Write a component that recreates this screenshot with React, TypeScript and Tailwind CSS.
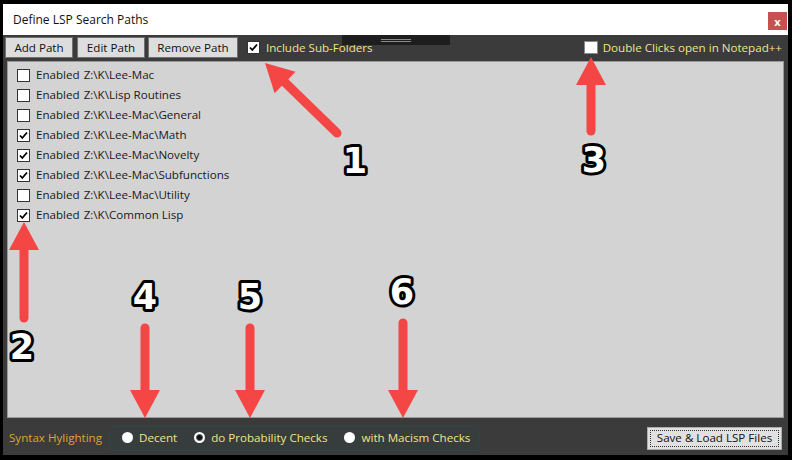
import { useState } from 'react'

const paths = [
  { path: 'Z:\\K\\Lee-Mac', on: false },
  { path: 'Z:\\K\\Lisp Routines', on: false },
  { path: 'Z:\\K\\Lee-Mac\\General', on: false },
  { path: 'Z:\\K\\Lee-Mac\\Math', on: true },
  { path: 'Z:\\K\\Lee-Mac\\Novelty', on: true },
  { path: 'Z:\\K\\Lee-Mac\\Subfunctions', on: true },
  { path: 'Z:\\K\\Lee-Mac\\Utility', on: false },
  { path: 'Z:\\K\\Common Lisp', on: true },
]

function Check({ checked }: { checked: boolean }) {
  return (
    <span className="w-[13px] h-[13px] bg-white border border-[#333333] flex items-center justify-center shrink-0">
      {checked && (
        <svg width="11" height="11" viewBox="0 0 11 11">
          <path d="M2 5.5 L4.3 8 L9 2.5" fill="none" stroke="#000" strokeWidth="1.8" />
        </svg>
      )}
    </span>
  )
}

function Radio({ checked, label }: { checked: boolean; label: string }) {
  return (
    <label className="flex items-center gap-[6px]">
      <span className="w-[11px] h-[11px] rounded-full bg-white flex items-center justify-center">
        {checked && <span className="w-[7px] h-[7px] rounded-full bg-[#111] border border-[#555]" />}
      </span>
      <span className="text-[#efe48a]">{label}</span>
    </label>
  )
}

function Arrow({ x1, y1, x2, y2 }: { x1: number; y1: number; x2: number; y2: number }) {
  // x1,y1 = tail, x2,y2 = tip
  const dx = x2 - x1
  const dy = y2 - y1
  const len = Math.hypot(dx, dy)
  const ux = dx / len
  const uy = dy / len
  const head = 28
  const bx = x2 - ux * head
  const by = y2 - uy * head
  const px = -uy * 15
  const py = ux * 15
  return (
    <g fill="#f54646" stroke="none">
      <line x1={x1} y1={y1} x2={bx + ux * 4} y2={by + uy * 4} stroke="#f54646" strokeWidth="9" strokeLinecap="round" />
      <polygon points={`${x2},${y2} ${bx + px},${by + py} ${bx - px},${by - py}`} />
    </g>
  )
}

function Num({ x, y, n }: { x: number; y: number; n: string }) {
  return (
    <text
      x={x}
      y={y}
      textAnchor="middle"
      fontFamily="'DejaVu Sans', sans-serif"
      fontWeight="bold"
      fontSize="35"
      fill="#fff"
      stroke="#000"
      strokeWidth="6"
      strokeLinejoin="round"
      style={{ paintOrder: 'stroke' }}
    >
      {n}
    </text>
  )
}

export default function App() {
  const [items] = useState(paths)

  return (
    <div className="relative w-[792px] h-[460px] bg-black pt-[4px] pl-[3px] pr-[4px] pb-[5px] flex flex-col font-['Open_Sans',sans-serif] text-[11.6px] overflow-hidden">
      {/* Title bar */}
      <div className="h-[31px] bg-white flex items-start justify-between pl-[10px] pr-[1px]">
        <span className="mt-[7px] text-[12px] text-[#111]">Define LSP Search Paths</span>
        <button className="mt-[8px] w-[19px] h-[18px] bg-[#c75050] text-white text-[11px] font-bold leading-none flex items-center justify-center">
          x
        </button>
      </div>

      <div className="flex-1 bg-[#3b3b3b] flex flex-col">
        {/* Toolbar */}
        <div className="h-[26px] flex items-start pt-[2px] pl-[2px] pr-[6px]">
          <button className="w-[68px] h-[21px] bg-[#dddddd] border border-[#707070] text-[#111]">Add Path</button>
          <button className="ml-[4px] w-[68px] h-[21px] bg-[#dddddd] border border-[#707070] text-[#111]">Edit Path</button>
          <button className="ml-[3px] w-[90px] h-[21px] bg-[#dddddd] border border-[#707070] text-[#111]">Remove Path</button>
          <label className="ml-[9px] h-[21px] flex items-center gap-[6px]">
            <Check checked />
            <span className="text-[#efe48a]">Include Sub-Folders</span>
          </label>
          <label className="ml-auto h-[21px] flex items-center gap-[5px]">
            <span className="w-[14px] h-[13px] bg-white border border-[#888]" />
            <span className="text-[#efe48a]">Double Clicks open in Notepad++</span>
          </label>
        </div>

        {/* Path list */}
        <div className="flex-1 mx-[4px] bg-[#d3d3d3] border border-[#9a9a9a] pt-[3px] pl-[9px] flex flex-col">
          {items.map((it) => (
            <div key={it.path} className="h-[20px] flex items-center">
              <Check checked={it.on} />
              <span className="ml-[6px] text-[#1a1a1a]">Enabled</span>
              <span className="ml-[4px] text-[#1a1a1a]">{it.path}</span>
            </div>
          ))}
        </div>

        {/* Bottom bar */}
        <div className="h-[37px] flex items-center pt-[3px] pl-[6px] pr-[6px]">
          <span className="text-[#dba633]">Syntax Hylighting</span>
          <div className="ml-[7px] h-[25px] w-[370px] rounded-md border border-[#2c4843] bg-[#373d3c] flex items-center gap-[17px] pl-[12px]">
            <Radio checked={false} label="Decent" />
            <Radio checked label="do Probability Checks" />
            <Radio checked={false} label="with Macism Checks" />
          </div>
          <button className="ml-auto w-[135px] h-[23px] bg-[#e1e1e1] border border-[#adadad] p-[2px]">
            <span className="w-full h-full border border-dotted border-[#333] flex items-center justify-center text-[#111]">
              Save &amp; Load LSP Files
            </span>
          </button>
        </div>
      </div>

      {/* grip handle overlay */}
      <div className="absolute left-[342px] top-[35px] w-[108px] h-[10px] bg-[#1e1e1e] flex flex-col items-center justify-center gap-[1px]">
        <span className="w-[30px] h-[1px] bg-[#8a8a8a]" />
        <span className="w-[30px] h-[1px] bg-[#8a8a8a]" />
      </div>

      {/* annotations */}
      <svg className="absolute inset-0 pointer-events-none" width="792" height="460" viewBox="0 0 792 460">
        <Arrow x1={337} y1={133} x2={265} y2={63} />
        <Arrow x1={591} y1={131} x2={591} y2={57} />
        <Arrow x1={24} y1={318} x2={24} y2={222} />
        <Arrow x1={145} y1={328} x2={145} y2={418} />
        <Arrow x1={250} y1={328} x2={250} y2={418} />
        <Arrow x1={403} y1={323} x2={403} y2={418} />
        <Num x={355} y={173} n="1" />
        <Num x={22} y={359} n="2" />
        <Num x={594} y={172} n="3" />
        <Num x={145} y={309} n="4" />
        <Num x={250} y={309} n="5" />
        <Num x={402} y={304} n="6" />
      </svg>
    </div>
  )
}
